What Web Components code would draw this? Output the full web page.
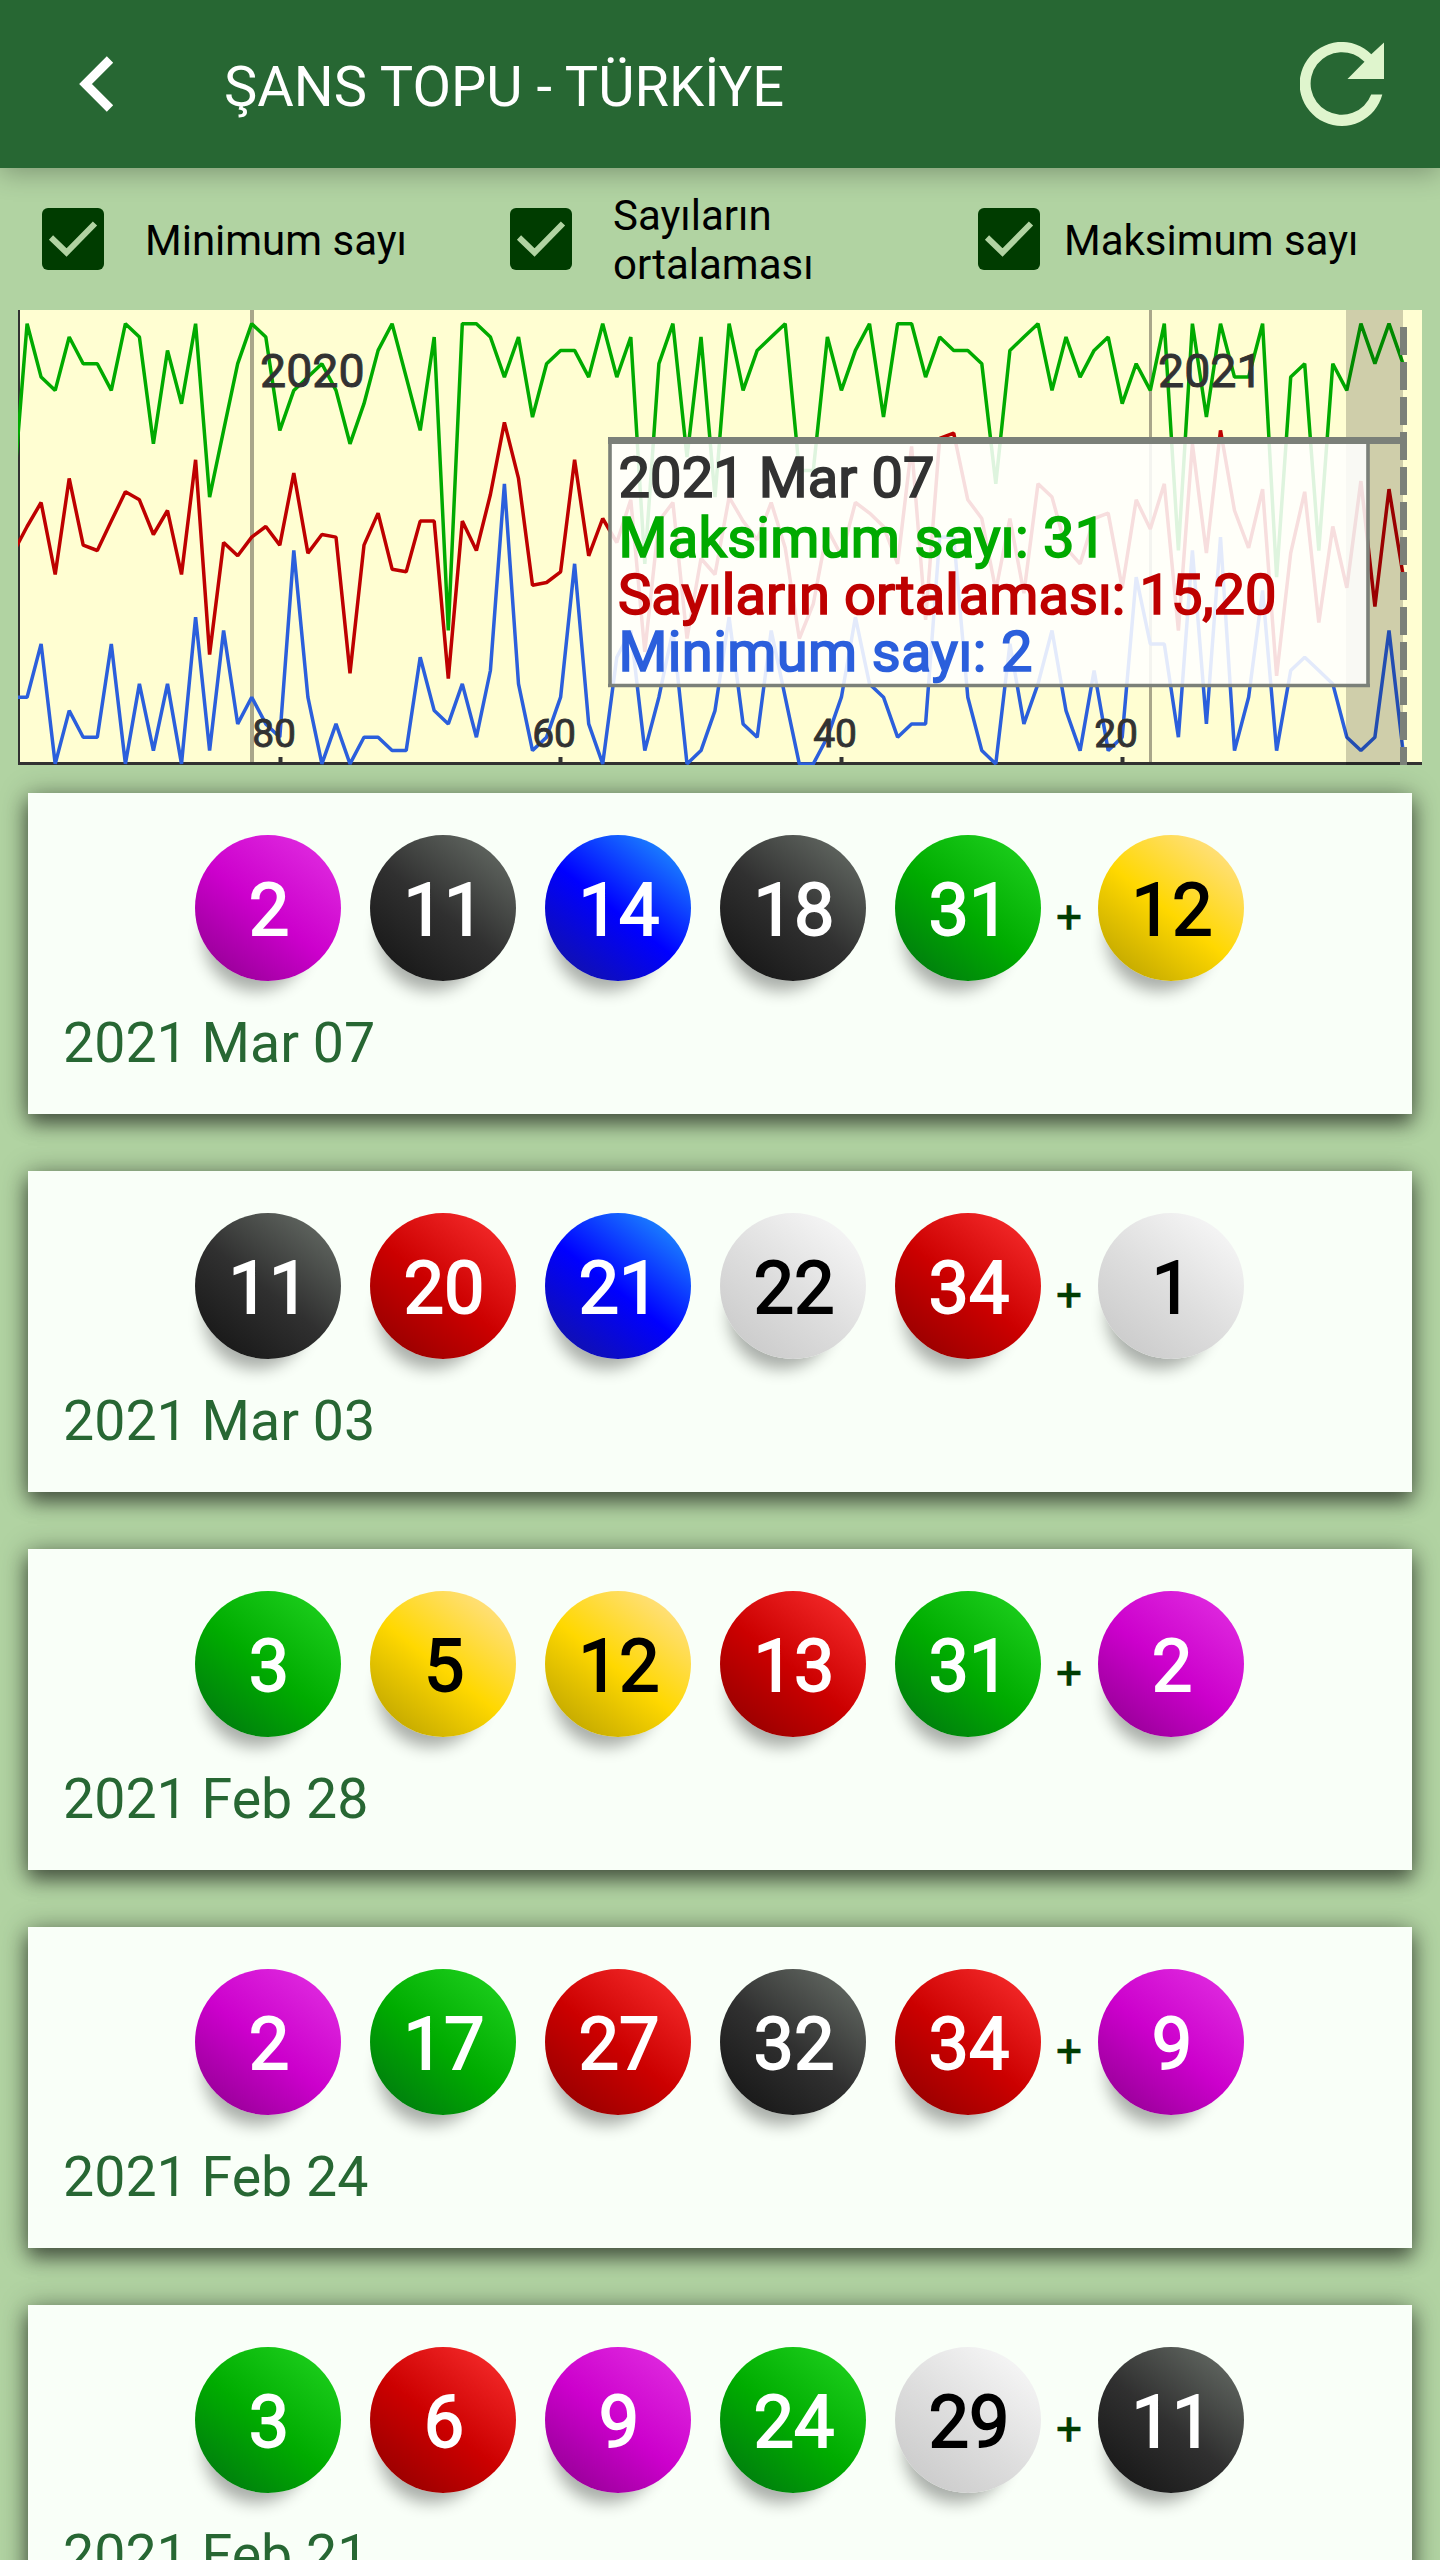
<!DOCTYPE html>
<html lang="tr">
<head>
<meta charset="UTF-8">
<title>Şans Topu - Türkiye</title>
<style>
  body {
    margin: 0;
    height: 2560px;
    overflow: hidden;
    background: #b1d3a2;
    font-family: Roboto, "Liberation Sans", sans-serif;
  }
</style>
</head>
<body>
<results-page></results-page>

<script>
class AppBar extends HTMLElement {
  constructor() {
    super();
    this.attachShadow({ mode: "open" });
  }
  connectedCallback() {
    this.shadowRoot.innerHTML = `
      <style>
        :host {
          display: flex;
          align-items: center;
          box-sizing: border-box;
          height: 168px;
          padding: 0 54px 0 79px;
          background: #276733;
          box-shadow: 0 4px 26px rgba(0, 0, 0, .3);
          color: #fff;
        }
        h1 {
          flex: 1;
          margin: 5px 0 0 109px;
          font-size: 56px;
          font-weight: 400;
          line-height: 66px;
        }
        svg { display: block; }
        .reload { margin-top: 1px; }
      </style>
      <svg width="36" height="56" viewBox="0 0 36 56">
        <path d="M31 3.500 6.500 28 31 52.500" fill="none" stroke="#fff" stroke-width="9"/>
      </svg>
      <h1><slot></slot></h1>
      <svg class="reload" width="86" height="86" viewBox="0 0 86 86">
        <path d="M71.300 12.200A42 42 0 1 0 82.300 52.500L71.200 52.500A31.300 31.300 0 1 1 64.500 19.800L47.500 37H84V.6Z" fill="#dff5cd"/>
      </svg>
    `;
  }
}
customElements.define("app-bar", AppBar);

class CheckOption extends HTMLElement {
  constructor() {
    super();
    this.attachShadow({ mode: "open" });
  }
  connectedCallback() {
    this.shadowRoot.innerHTML = `
      <style>
        :host {
          display: flex;
          align-items: center;
          color: #000;
          font-size: 42px;
          line-height: 49px;
        }
        svg { flex: none; }
        span {
          display: block;
          margin: 2px 0 0 var(--label-gap, 41px);
        }
      </style>
      <svg width="62" height="62" viewBox="0 0 62 62">
        <rect width="62" height="62" rx="6" fill="#003c00"/>
        <path d="M9 29.500 24.500 44.500 53 15.500" fill="none" stroke="#b1d3a2" stroke-width="6"/>
      </svg>
      <span><slot></slot></span>
    `;
  }
}
customElements.define("check-option", CheckOption);

// oldest draw first, the last value is the selected draw
const MAX = [
  21, 34, 30, 29, 33, 31, 31, 29, 34, 33, 25, 32, 28, 34, 21, 26, 31, 34, 33, 26,
  29, 30, 31, 29, 25, 28, 32, 34, 30, 26, 33, 11, 34, 34, 33, 30, 33, 27, 31, 32,
  32, 30, 34, 30, 33, 16, 31, 34, 24, 33, 21, 34, 29, 32, 33, 34, 23, 23, 33, 29,
  32, 34, 27, 34, 34, 30, 33, 32, 32, 31, 22, 32, 33, 34, 29, 33, 30, 32, 33, 28,
  31, 29, 34, 17, 34, 27, 34, 30, 30, 34, 15, 30, 31, 17, 31, 29, 34, 31, 34, 31
];
const AVG = [
  16.8, 18.8, 20.6, 15.2, 22.4, 17.4, 17, 19.2, 21.4, 20.8, 18.2, 20, 15.2, 23.8, 9.2, 17.6, 16.6, 18, 18.8, 17.4,
  22.8, 16.8, 18.2, 18, 7.8, 17.4, 19.8, 15.6, 15.4, 19.2, 19.2, 7.4, 19.2, 17, 21.2, 26.6, 22.4, 14.4, 14.6, 15.4,
  23.8, 16.6, 19.4, 17.6, 20.8, 9.4, 19.2, 20.6, 10.4, 16.4, 15.2, 21, 19.2, 17.8, 20.6, 17.2, 10.4, 13, 18.6, 16.6,
  20.6, 19.8, 18.8, 16, 24.8, 11.8, 25.4, 25.8, 20.8, 19.4, 14, 19.4, 13.8, 22, 21, 17.2, 16, 19.4, 19.8, 14.2,
  20.8, 18.6, 22, 11, 25, 16.8, 26, 20, 17.2, 21.6, 7.6, 16.8, 21.4, 11.6, 18.8, 14.2, 22.2, 12.8, 21.6, 15.2
];
const MIN = [
  6, 6, 10, 1, 5, 3, 3, 10, 1, 7, 2, 7, 1, 12, 2, 11, 4, 6, 4, 3,
  17, 6, 1, 4, 1, 3, 3, 2, 2, 9, 5, 4, 7, 3, 8, 22, 7, 2, 3, 6,
  16, 4, 1, 9, 11, 2, 6, 11, 1, 2, 5, 12, 4, 3, 11, 6, 1, 1, 3, 6,
  12, 7, 6, 3, 4, 4, 18, 18, 6, 2, 1, 10, 4, 7, 11, 5, 2, 8, 2, 3,
  15, 10, 10, 3, 17, 4, 18, 2, 6, 14, 2, 8, 9, 8, 7, 3, 2, 3, 11, 2
];

class DrawChart extends HTMLElement {
  constructor() {
    super();
    this.attachShadow({ mode: "open" });
  }
  // chart box is 1404 x 455, the newest draw sits at x = 1385
  line(values, color) {
    const points = values.map((v, i) => {
      const x = 1385 - (values.length - 1 - i) * 14.04;
      const y = 13.7 + (34 - v) * 13.34;
      return x.toFixed(1) + "," + y.toFixed(1);
    });
    return `<polyline points="${points.join(" ")}" stroke="${color}"/>`;
  }
  tick(label, x) {
    return `
      <rect x="${x - 1.5}" y="447" width="4" height="6" fill="#323232"/>
      <text class="tick" x="${x + 16}" y="436.500">${label}</text>
    `;
  }
  connectedCallback() {
    this.shadowRoot.innerHTML = `
      <style>
        :host { display: block; height: 455px; }
        svg { display: block; }
        polyline { fill: none; stroke-width: 3.5; stroke-linejoin: bevel; }
        text { fill: #323232; stroke: #323232; stroke-width: .9; }
        .year { font-size: 46.500px; }
        .tick { font-size: 39px; text-anchor: end; }
        .tip text { font-size: 56px; stroke-width: 1.7; }
      </style>
      <svg width="1404" height="455" viewBox="0 0 1404 455">
        <rect width="1404" height="455" fill="#fffed2"/>
        <rect x="232" width="4" height="453" fill="#a9a68a"/>
        <rect x="1131" width="3" height="453" fill="#a9a68a"/>
        <rect width="2" height="455" fill="#323232"/>
        <rect y="452" width="1404" height="3" fill="#323232"/>
        ${this.line(MAX, "#0a0")}
        ${this.line(AVG, "#be0000")}
        ${this.line(MIN, "#2b5fdc")}
        <rect x="1328" width="57" height="455" fill="rgba(0, 0, 0, .19)"/>
        <text class="year" x="242" y="76.500">2020</text>
        <text class="year" x="1140" y="76.500">2021</text>
        ${this.tick("80", 262)}
        ${this.tick("60", 542)}
        ${this.tick("40", 823)}
        ${this.tick("20", 1104)}
        <path d="M1385.500 17V455" stroke="#7b8079" stroke-width="7" stroke-dasharray="28 7"/>
        <g class="tip">
          <rect x="592" y="130" width="758" height="245" fill="#fff" fill-opacity=".87"/>
          <path d="M592 127V377M1350 134V377M590 375.500H1352" fill="none" stroke="#7b8079" stroke-width="3.600"/>
          <rect x="590" y="127" width="795" height="7" fill="#7b8079"/>
          <text x="600.500" y="186.500" letter-spacing=".1">2021 Mar 07</text>
          <text x="600.500" y="246.500" letter-spacing=".3" style="fill:#0a0;stroke:#0a0">Maksimum sayı: 31</text>
          <text x="600" y="303.500" letter-spacing=".05" style="fill:#be0000;stroke:#be0000">Sayıların ortalaması: 15,20</text>
          <text x="600.500" y="360.500" letter-spacing=".4" style="fill:#2b5fdc;stroke:#2b5fdc">Minimum sayı: 2</text>
        </g>
      </svg>
    `;
  }
}
customElements.define("draw-chart", DrawChart);

const BALL_COLORS = {
  white: ["#f8f8f8", "#dedede", "#c8c8c8", "#000"],
  magenta: ["#e02ce0", "#cc00cc", "#900090", "#fff"],
  green: ["#1ed01e", "#00ac00", "#007610", "#fff"],
  yellow: ["#ffe08c", "#ffd800", "#b8a000", "#000"],
  red: ["#f62c2c", "#cc0000", "#900000", "#fff"],
  black: ["#646a64", "#303030", "#141414", "#fff"],
  blue: ["#1e90ff", "#0000ff", "#1414a0", "#fff"]
};

class LottoBall extends HTMLElement {
  constructor() {
    super();
    this.attachShadow({ mode: "open" });
  }
  connectedCallback() {
    const [light, base, dark, text] = BALL_COLORS[this.getAttribute("color")];
    this.shadowRoot.innerHTML = `
      <style>
        :host {
          display: block;
          width: 146px;
          height: 146px;
          border-radius: 50%;
          box-sizing: border-box;
          padding: 3px 0 0 3px;
          background: linear-gradient(218deg, ${light} 7%, ${base} 52%, ${dark} 96%);
          box-shadow: -12px 31px 16px -21px rgba(0, 0, 0, .32);
          color: ${text};
          font-size: 72px;
          line-height: 146px;
          text-align: center;
          -webkit-text-stroke: 1.800px ${text};
        }
      </style>
      <slot></slot>
    `;
  }
}
customElements.define("lotto-ball", LottoBall);

class DrawCard extends HTMLElement {
  constructor() {
    super();
    this.attachShadow({ mode: "open" });
  }
  connectedCallback() {
    const ball = (item) => {
      const [number, color] = item.split(":");
      return `<lotto-ball color="${color}">${number}</lotto-ball>`;
    };
    const balls = this.getAttribute("balls").split(" ").map(ball).join("");
    this.shadowRoot.innerHTML = `
      <style>
        :host {
          display: block;
          box-sizing: border-box;
          height: 321px;
          padding: 42px 37px 0 35px;
          background: #f9fff8;
          box-shadow: 0 10px 18px rgba(0, 0, 0, .46), 0 2px 26px rgba(0, 0, 0, .38);
        }
        .row {
          display: flex;
          justify-content: center;
        }
        .main { display: flex; gap: 29px; }
        .plus {
          width: 57px;
          color: #003c00;
          font-size: 46px;
          line-height: 164px;
          height: 146px;
          text-align: center;
          -webkit-text-stroke: .5px #003c00;
        }
        p {
          margin: 30px 0 0;
          color: #276733;
          font-size: 55.500px;
          line-height: 66px;
        }
      </style>
      <div class="row">
        <div class="main">${balls}</div>
        <div class="plus">+</div>
        ${ball(this.getAttribute("bonus"))}
      </div>
      <p><slot></slot></p>
    `;
  }
}
customElements.define("draw-card", DrawCard);

class ResultsPage extends HTMLElement {
  constructor() {
    super();
    this.attachShadow({ mode: "open" });
  }
  connectedCallback() {
    this.shadowRoot.innerHTML = `
      <style>
        :host { display: block; height: 2560px; overflow: hidden; }
        .options {
          display: grid;
          grid-template-columns: repeat(3, 468px);
          height: 142px;
          padding-left: 42px;
        }
        draw-chart { margin-left: 18px; }
        .cards {
          display: flex;
          flex-direction: column;
          gap: 57px;
          padding: 28px 28px 0;
        }
      </style>
      <app-bar>ŞANS TOPU - TÜRKİYE</app-bar>
      <div class="options">
        <check-option>Minimum sayı</check-option>
        <check-option>Sayıların<br>ortalaması</check-option>
        <check-option style="--label-gap: 24px">Maksimum sayı</check-option>
      </div>
      <draw-chart></draw-chart>
      <div class="cards">
        <draw-card balls="2:magenta 11:black 14:blue 18:black 31:green" bonus="12:yellow">2021 Mar 07</draw-card>
        <draw-card balls="11:black 20:red 21:blue 22:white 34:red" bonus="1:white">2021 Mar 03</draw-card>
        <draw-card balls="3:green 5:yellow 12:yellow 13:red 31:green" bonus="2:magenta">2021 Feb 28</draw-card>
        <draw-card balls="2:magenta 17:green 27:red 32:black 34:red" bonus="9:magenta">2021 Feb 24</draw-card>
        <draw-card balls="3:green 6:red 9:magenta 24:green 29:white" bonus="11:black">2021 Feb 21</draw-card>
      </div>
    `;
  }
}
customElements.define("results-page", ResultsPage);
</script>
</body>
</html>
